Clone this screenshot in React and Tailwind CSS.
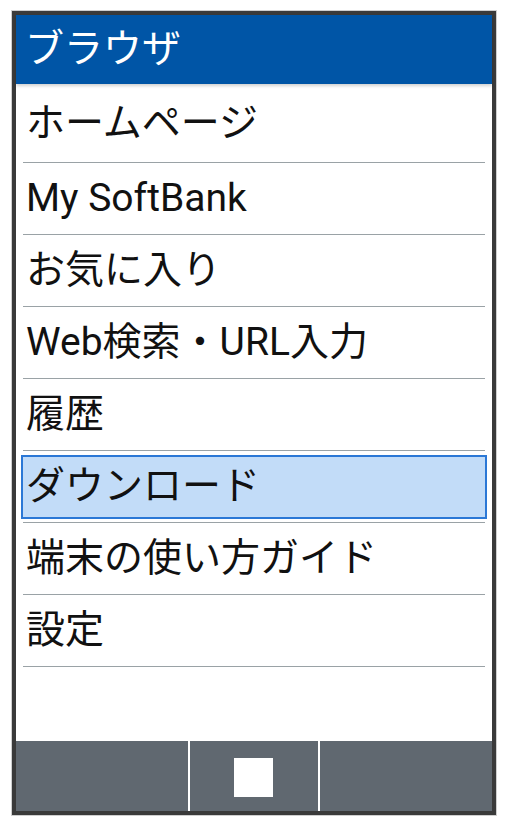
import React from "react";

const items = [
  "ホームページ",
  "My SoftBank",
  "お気に入り",
  "Web検索・URL入力",
  "履歴",
  "ダウンロード",
  "端末の使い方ガイド",
  "設定",
];

const SELECTED = 5;

function Row({ label, first, selected }) {
  return (
    <div className="px-[7px]">
      <div
        className={
          (first ? "h-[79px] " : "h-[72px] ") +
          "flex items-center border-b border-[#9aa2a6]"
        }
      >
        {selected ? (
          <div className="-mx-[2px] flex h-[64px] flex-1 items-center border-2 border-[#2b78d6] bg-[#c2dcf8] pl-[3px]">
            {label}
          </div>
        ) : (
          <div className="pl-[3px]">{label}</div>
        )}
      </div>
    </div>
  );
}

export default function App() {
  return (
    <div className="h-[826px] w-[507px] bg-white pl-[12px] pt-[11px] font-['Roboto','Noto_Sans_CJK_JP',sans-serif]">
      <div className="flex h-[804px] w-[484px] flex-col border-4 border-[#3a3a3a] bg-white ring-1 ring-[#cfcfcf]">
        <div className="relative z-10 flex h-[69px] shrink-0 items-center bg-[#0055a6] pl-[9px] text-[39px] leading-none text-white shadow-[0_2px_3px_rgba(0,0,0,0.18)]">
          ブラウザ
        </div>

        <div className="text-[39px] leading-none text-[#111]">
          {items.map((label, i) => (
            <Row key={label} label={label} first={i === 0} selected={i === SELECTED} />
          ))}
        </div>

        <div className="flex-1" />

        <div className="flex h-[70px] shrink-0 bg-[#606870]">
          <div className="w-[172px]" />
          <div className="w-[2px] bg-white" />
          <div className="flex w-[128px] items-center justify-center pt-[3px] pr-[2px]">
            <div className="h-[39px] w-[39px] bg-white" />
          </div>
          <div className="w-[2px] bg-white" />
          <div className="flex-1" />
        </div>
      </div>
    </div>
  );
}
